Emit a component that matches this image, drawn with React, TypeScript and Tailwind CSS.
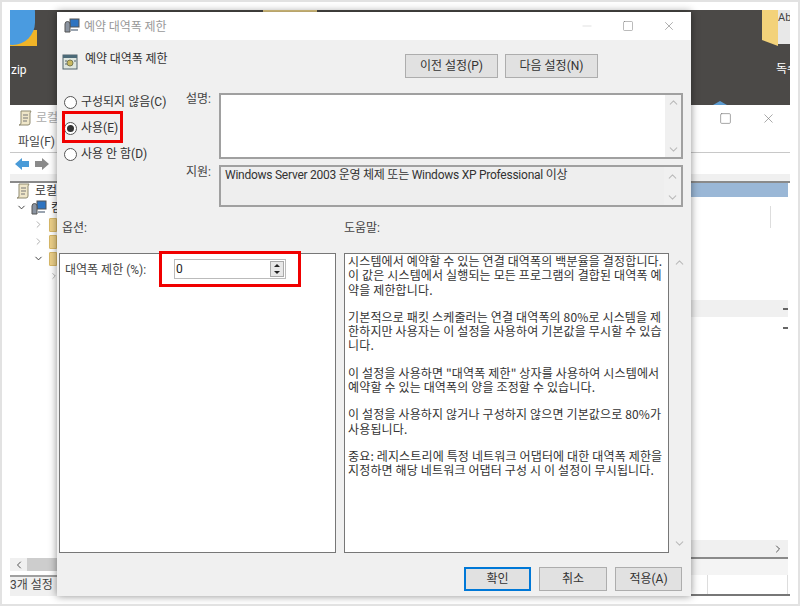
import { ChevronDown, ChevronLeft, ChevronRight, ChevronUp, Minus, Square, X } from 'lucide-react';

const helpText = [
  [
    '시스템에서 예약할 수 있는 연결 대역폭의 백분율을 결정합니다.',
    '이 값은 시스템에서 실행되는 모든 프로그램의 결합된 대역폭 예',
    '약을 제한합니다.',
  ],
  [
    '기본적으로 패킷 스케줄러는 연결 대역폭의 80%로 시스템을 제',
    '한하지만 사용자는 이 설정을 사용하여 기본값을 무시할 수 있습',
    '니다.',
  ],
  [
    '이 설정을 사용하면 "대역폭 제한" 상자를 사용하여 시스템에서',
    '예약할 수 있는 대역폭의 양을 조정할 수 있습니다.',
  ],
  [
    '이 설정을 사용하지 않거나 구성하지 않으면 기본값으로 80%가',
    '사용됩니다.',
  ],
  [
    '중요: 레지스트리에 특정 네트워크 어댑터에 대한 대역폭 제한을',
    '지정하면 해당 네트워크 어댑터 구성 시 이 설정이 무시됩니다.',
  ],
];

function ScrollIcon() {
  return (
    <svg width="16" height="16" viewBox="0 0 16 16">
      <path d="M4 1h10l-1 2v10q0 2-2 2H2q2 0 2-2V4z" fill="#efe6c8" stroke="#8f8a70" />
      <path d="M6 5h5M6 8h5M6 11h4" stroke="#777" />
    </svg>
  );
}

function PcIcon() {
  return (
    <svg width="16" height="16" viewBox="0 0 16 16">
      <rect x="6" y="1" width="9" height="8" fill="#2f74c0" stroke="#555" />
      <path d="M1 6a2.5 2.5 0 0 1 5 0v8H1z" fill="#8a93a0" stroke="#555" />
      <path d="M7 11h7v2H7z" fill="#9aa4b0" />
    </svg>
  );
}

function PolicyIcon() {
  return (
    <svg width="16" height="16" viewBox="0 0 16 16">
      <rect x="1" y="1" width="14" height="14" fill="#dfe6df" stroke="#50626a" />
      <rect x="1" y="1" width="14" height="3" fill="#4c6a78" />
      <circle cx="8" cy="9" r="3" fill="#c8b860" stroke="#7a7a50" />
      <path d="M3 7h2M3 10h2M12 7h2" stroke="#50626a" />
    </svg>
  );
}

function Folder() {
  return <span className="w-[8px] h-[14px] bg-[#eccf88] border border-[#d8b868] rounded-l-[1px]" />;
}

function Radio({ label, checked }: { label: string; checked?: boolean }) {
  return (
    <div className="flex items-center gap-[4px] h-[26px]">
      <span className="w-[13px] h-[13px] rounded-full border border-[#555] bg-white flex items-center justify-center">
        {checked && <span className="w-[7px] h-[7px] rounded-full bg-[#333]" />}
      </span>
      <span>{label}</span>
    </div>
  );
}

function Btn({ label, className }: { label: string; className: string }) {
  return (
    <div className={`h-[24px] bg-[#e1e1e1] flex items-center justify-center ${className}`}>{label}</div>
  );
}

function ScrollArrows({ className }: { className: string }) {
  return (
    <div className={`flex flex-col justify-between items-center text-[#bbb] bg-[#f0f0f0] ${className}`}>
      <ChevronUp size={13} />
      <ChevronDown size={13} />
    </div>
  );
}

function Dash() {
  return <span className="w-[5px] h-[2px] bg-[#666]" />;
}

function BackgroundWindow() {
  return (
    <div className="flex-1 flex flex-col bg-white">
      <div className="h-[26px] flex items-center pl-[7px] pr-[14px] text-[#aaa]">
        <ScrollIcon />
        <span className="ml-[3px]">로컬</span>
        <span className="ml-auto flex items-center gap-[29px] text-[#777]">
          <Square size={13} strokeWidth={1.2} />
          <X size={15} strokeWidth={1} />
        </span>
      </div>
      <div className="h-[22px] border-b border-[#c8c8c8] pl-[8px] pt-[3px] text-[#444] leading-[16px]">파일(F)</div>
      <div className="h-[28px] flex items-center gap-[4px] pl-[4px] border-b-[7px] border-[#f0f0f0]">
        <svg width="16" height="14" viewBox="0 0 16 14">
          <path d="M1 7l7-6v3h7v6H8v3z" fill="#4a9bd8" />
        </svg>
        <svg width="16" height="14" viewBox="0 0 16 14">
          <path d="M15 7L8 1v3H1v6h7v3z" fill="#8a8a8a" />
        </svg>
      </div>
      <div className="h-[2px] bg-[#8a8a8a]" />
      <div className="flex-1 flex">
        <div className="w-[680px] flex flex-col">
          <div className="flex-1 pl-[5px] text-[#333]">
            <div className="flex items-center gap-[4px] h-[16px]">
              <ScrollIcon />
              <span className="whitespace-nowrap">로컬</span>
            </div>
            <div className="flex items-center h-[17px] gap-[4px] pl-[1px]">
              <ChevronDown size={11} />
              <PcIcon />
              <span>컴</span>
            </div>
            <div className="h-[17px] pl-[18px] flex items-center gap-[5px] text-[#aaa]">
              <ChevronRight size={11} />
              <Folder />
            </div>
            <div className="h-[17px] pl-[18px] flex items-center gap-[5px] text-[#aaa]">
              <ChevronRight size={11} />
              <Folder />
            </div>
            <div className="h-[17px] pl-[18px] flex items-center gap-[5px]">
              <ChevronDown size={11} />
              <Folder />
            </div>
            <div className="h-[17px] pl-[34px] flex items-center text-[#aaa]">
              <ChevronRight size={10} />
            </div>
          </div>
          <div className="h-[13px] bg-[#f0f0f0] flex items-center">
            <span className="w-[17px] flex justify-center text-[#555]"><ChevronLeft size={12} /></span>
            <span className="w-[40px] h-full bg-[#cdcdcd]" />
          </div>
          <div className="h-[4px]" />
          <div className="h-[21px] border-t-2 border-[#a0a0a0] text-[#444] leading-[17px] bg-[#f0f0f0]">3개 설정</div>
        </div>
        <div className="flex-1 flex flex-col pr-[2px] border-b-2 border-[#777]">
          <div className="h-[14px] bg-[#9ab7d6]" />
          <div className="h-[103px] flex flex-col items-end">
            <span className="w-[1px] h-[22px] mt-[9px] mr-[17px] bg-[#ddd]" />
            <span className="mt-[59px]"><Dash /></span>
          </div>
          <div className="h-[17px] bg-[#f0f0f0] flex items-center justify-end"><Dash /></div>
          <div className="h-[12px] flex items-end justify-end"><Dash /></div>
          <div className="flex-1" />
          <div className="h-[17px] bg-[#f0f0f0] flex items-center justify-end pr-[4px] text-[#555]">
            <ChevronRight size={12} />
          </div>
          <div className="h-[18px] border-t-2 border-[#8a8a8a] bg-[#f4f4f4]" />
          <div className="h-[19px] flex pl-[17px]">
            <span className="flex-1 border-x border-[#ddd]" />
          </div>
        </div>
      </div>
    </div>
  );
}

export default function App() {
  return (
    <div className="relative w-[800px] h-[606px] bg-white border-2 border-[#e2e2e2] p-[8px] overflow-hidden text-[12px] text-[#333] font-['Roboto','Noto_Sans_CJK_KR',sans-serif]">
      <div className="w-full h-full flex flex-col">
        <div className="relative h-[95px] bg-[#4b4947] overflow-hidden text-white">
          <div className="absolute left-0 top-[20px] w-[27px] h-[16px] rounded-tl-[14px] bg-[#f0b428]" />
          <div className="absolute -left-[20px] -top-[20px] w-[45px] h-[55px] rounded-full bg-[#4a9be0]" />
          <div className="absolute left-[1px] top-[51px]">zip</div>
          <div className="absolute left-[253px] top-0 w-[54px] h-[2px] bg-[#e8cf88]" />
          <svg className="absolute right-[12px] top-0" width="16" height="36" viewBox="0 0 16 36">
            <path d="M0 0h16v36L0 30z" fill="#f3d27a" />
          </svg>
          <div className="absolute right-0 top-0 w-[12px] h-[34px] bg-[#e8e8e8] text-[#444] text-[11px] overflow-hidden">Abg</div>
          <div className="absolute right-0 top-[50px] w-[14px] overflow-hidden whitespace-nowrap">독수</div>
          <svg className="absolute left-[703px] bottom-0" width="14" height="4" viewBox="0 0 14 4">
            <path d="M0 4l7-4 7 4z" fill="#5b9bd0" />
          </svg>
        </div>
        <BackgroundWindow />
      </div>

      <div className="absolute left-[55px] top-[10px] w-[634px] h-[584px] bg-[#f0f0f0] flex flex-col shadow-[0_0_8px_rgba(0,0,0,0.45)]">
        <div className="h-[28px] bg-white flex items-center pl-[7px] pr-[15px] text-[#999] font-['Noto_Sans_CJK_KR',sans-serif]">
          <PcIcon />
          <span className="ml-[4px]">예약 대역폭 제한</span>
          <span className="ml-auto flex items-center gap-[28px] text-[#777]">
            <Minus size={14} strokeWidth={1} className="text-[#ccc]" />
            <Square size={12} strokeWidth={1} />
            <X size={14} strokeWidth={1} />
          </span>
        </div>

        <div className="h-[53px] flex justify-between pl-[5px] pr-[93px] pt-[14px]">
          <div className="flex items-start gap-[7px]">
            <PolicyIcon />
            <span className="leading-[10px] -mt-[1px] font-['Noto_Sans_CJK_KR',sans-serif]">예약 대역폭 제한</span>
          </div>
          <div className="flex gap-[7px]">
            <Btn label="이전 설정(P)" className="w-[93px] border border-[#adadad]" />
            <Btn label="다음 설정(N)" className="w-[93px] border border-[#adadad]" />
          </div>
        </div>

        <div className="h-[114px] flex pr-[8px]">
          <div className="w-[129px] pl-[7px] flex flex-col -mt-[4px]">
            <Radio label="구성되지 않음(C)" />
            <Radio label="사용(E)" checked />
            <Radio label="사용 안 함(D)" />
          </div>
          <div className="w-[33px] flex flex-col text-[#444] pt-[1px]">
            <div className="h-[71px] leading-[10px]">설명:</div>
            <div className="leading-[14px]">지원:</div>
          </div>
          <div className="flex-1 flex flex-col gap-[6px]">
            <div className="h-[66px] bg-white border-2 border-[#a0a0a0] flex justify-end">
              <ScrollArrows className="w-[16px] py-[1px]" />
            </div>
            <div className="h-[42px] border-2 border-[#a0a0a0] bg-[#eeeeee] flex justify-between pl-[4px]">
              <span className="leading-[16px] tracking-[-0.25px]">Windows Server 2003 운영 체제 또는 Windows XP Professional 이상</span>
              <ScrollArrows className="w-[17px] pb-[1px] pt-[3px]" />
            </div>
          </div>
        </div>

        <div className="h-[46px] flex pl-[5px] pt-[13px] leading-[16px] text-[#444]">
          <span className="w-[282px]">옵션:</span>
          <span>도움말:</span>
        </div>

        <div className="h-[300px] flex pl-[2px]">
          <div className="w-[277px] bg-white border border-[#777] pl-[5px] pt-[5px] flex items-start">
            <span className="w-[109px] pt-[2px] text-[#444]">대역폭 제한 (%):</span>
            <div className="w-[112px] h-[20px] border border-[#bbb] bg-white flex items-center justify-between pr-[1px] pl-[1px]">
              <span className="text-[#222]">0</span>
              <div className="w-[14px] h-[16px] flex flex-col justify-between items-center bg-[#e8e8e8] border border-[#aaa] text-[#222]">
                <span className="w-0 h-0 mt-[2px] border-x-[3px] border-x-transparent border-b-[3px] border-b-[#222]" />
                <span className="w-0 h-0 mb-[2px] border-x-[3px] border-x-transparent border-t-[3px] border-t-[#222]" />
              </div>
            </div>
          </div>
          <div className="ml-[8px] w-[325px] bg-white border border-[#777] pl-[3px] text-[#333] leading-[14.3px] tracking-[0.15px] flex flex-col gap-[13px] whitespace-nowrap font-['Noto_Sans_CJK_KR',sans-serif]">
            {helpText.map((para, i) => (
              <div key={i}>
                {para.map((line, j) => (
                  <div key={j}>{line}</div>
                ))}
              </div>
            ))}
          </div>
          <ScrollArrows className="w-[20px] py-[3px]" />
        </div>

        <div className="flex justify-end gap-[8px] pr-[9px] pt-[14px] text-[#333]">
          <Btn label="확인" className="w-[67px] border-2 border-[#0078d7]" />
          <Btn label="취소" className="w-[68px] border border-[#adadad]" />
          <Btn label="적용(A)" className="w-[67px] border border-[#adadad]" />
        </div>
      </div>

      <div className="absolute left-[60px] top-[109px] w-[61px] h-[32px] border-[3px] border-[#f00000]" />
      <div className="absolute left-[157px] top-[249px] w-[142px] h-[36px] border-[3px] border-[#f00000]" />
    </div>
  );
}
